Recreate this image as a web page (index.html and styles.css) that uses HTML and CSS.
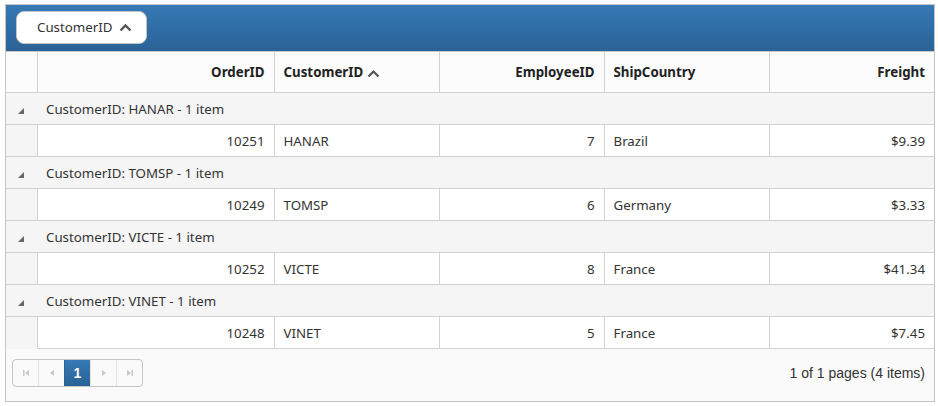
FILE: index.html
```html
<!DOCTYPE html>
<html>
<head>
<meta charset="utf-8">
<link rel="stylesheet" href="styles.css">
</head>
<body>
<div class="grid">
  <div class="grouping">
    <span class="group-chip">CustomerID
      <svg class="chev" width="13" height="9" viewBox="0 0 13 9"><path d="M1.5 7.5 L6.5 2.5 L11.5 7.5" fill="none" stroke="#555" stroke-width="2.4"/></svg>
    </span>
  </div>
  <table class="tbl">
    <colgroup>
      <col class="c-h"><col class="c-o"><col class="c-n"><col class="c-n"><col class="c-n"><col class="c-n">
    </colgroup>
    <thead>
      <tr>
        <th class="hc"></th>
        <th class="r">OrderID</th>
        <th>CustomerID <svg class="chev" width="13" height="9" viewBox="0 0 13 9"><path d="M1.5 7.5 L6.5 2.5 L11.5 7.5" fill="none" stroke="#555" stroke-width="2.2"/></svg></th>
        <th class="r">EmployeeID</th>
        <th>ShipCountry</th>
        <th class="r">Freight</th>
      </tr>
    </thead>
    <tbody>
      <tr class="grp"><td class="hc"><span class="tri"></span></td><td colspan="5">CustomerID: HANAR - 1 item</td></tr>
      <tr class="row"><td class="hc"></td><td class="r">10251</td><td>HANAR</td><td class="r">7</td><td>Brazil</td><td class="r">$9.39</td></tr>
      <tr class="grp"><td class="hc"><span class="tri"></span></td><td colspan="5">CustomerID: TOMSP - 1 item</td></tr>
      <tr class="row"><td class="hc"></td><td class="r">10249</td><td>TOMSP</td><td class="r">6</td><td>Germany</td><td class="r">$3.33</td></tr>
      <tr class="grp"><td class="hc"><span class="tri"></span></td><td colspan="5">CustomerID: VICTE - 1 item</td></tr>
      <tr class="row"><td class="hc"></td><td class="r">10252</td><td>VICTE</td><td class="r">8</td><td>France</td><td class="r">$41.34</td></tr>
      <tr class="grp"><td class="hc"><span class="tri"></span></td><td colspan="5">CustomerID: VINET - 1 item</td></tr>
      <tr class="row"><td class="hc"></td><td class="r">10248</td><td>VINET</td><td class="r">5</td><td>France</td><td class="r">$7.45</td></tr>
    </tbody>
  </table>
  <div class="pager">
    <div class="pages">
      <span class="pb"><svg width="8" height="8" viewBox="0 0 8 8"><rect x="1" y="1" width="1.5" height="6" fill="#c8c8c8"/><path d="M7 1 L3 4 L7 7Z" fill="#c8c8c8"/></svg></span>
      <span class="pb"><svg width="8" height="8" viewBox="0 0 8 8"><path d="M6 1 L2 4 L6 7Z" fill="#c8c8c8"/></svg></span>
      <span class="pb active">1</span>
      <span class="pb"><svg width="8" height="8" viewBox="0 0 8 8"><path d="M2 1 L6 4 L2 7Z" fill="#c8c8c8"/></svg></span>
      <span class="pb"><svg width="8" height="8" viewBox="0 0 8 8"><path d="M1 1 L5 4 L1 7Z" fill="#c8c8c8"/><rect x="5.5" y="1" width="1.5" height="6" fill="#c8c8c8"/></svg></span>
    </div>
    <div class="info">1 of 1 pages (4 items)</div>
  </div>
</div>
</body>
</html>
```
FILE: styles.css
```css
body {
  margin: 0;
  background: #fff;
  font-family: "Noto Sans", "Open Sans", sans-serif;
  font-size: 13.3px;
  color: #333;
}
.grid {
  margin: 4px 0 0 5px;
  width: 928px;
  border: 1px solid #c5c5c5;
  background: #fafafa;
}
.grouping {
  height: 46px;
  background: linear-gradient(#3679b6, #2a6396);
  display: flex;
  align-items: center;
  padding-left: 10px;
  border-bottom: 1px solid #c5c5c5;
}
.group-chip {
  display: inline-flex;
  align-items: center;
  gap: 7px;
  height: 31px;
  padding: 0 14px 0 20px;
  background: #fff;
  border: 1px solid #c5c5c5;
  border-radius: 8px;
  color: #333;
  margin-top: -2px;
}
.chev { vertical-align: middle; }
.tbl {
  width: 100%;
  border-collapse: collapse;
  table-layout: fixed;
}
.c-h { width: 31px; }
.c-o { width: 237px; }
.tbl th, .tbl td {
  border: 1px solid #d2d2d2;
  padding: 0 9px;
  text-align: left;
  white-space: nowrap;
}
.tbl tr > :first-child { border-left: none; }
.tbl tr > :last-child { border-right: none; }
.tbl th {
  height: 40px;
  font-weight: bold;
  color: #222;
  background: #fcfcfc;
  border-top: none;
}
.tbl .r { text-align: right; }
.grp td {
  height: 31px;
  background: #f5f5f5;
  border-left: none;
  border-right: none;
}
.row td {
  height: 31px;
  background: #fff;
}
.row td.hc { background: #f5f5f5; border-top: none; border-bottom: none; }
.tri {
  display: inline-block;
  width: 0; height: 0;
  border-left: 6px solid transparent;
  border-bottom: 6px solid #666;
  margin-left: 3px;
}
.pager {
  height: 52px;
  display: flex;
  align-items: center;
  justify-content: space-between;
  padding: 0 9px 4px 6px;
  box-sizing: border-box;
  font-family: "Liberation Sans", Arial, sans-serif;
  color: #333;
}
.pages {
  display: flex;
  border: 1px solid #c5c5c5;
  border-radius: 4px;
  overflow: hidden;
  background: #fafafa;
}
.pb {
  width: 25px;
  height: 26px;
  display: flex;
  align-items: center;
  justify-content: center;
  border-left: 1px solid #e3e3e3;
  font-weight: bold;
  font-size: 14px;
}
.pb:first-child { border-left: none; }
.pb.active {
  background: linear-gradient(#3679b6, #2a6396);
  color: #fff;
  border-left-color: #2a6396;
}
.info { font-size: 14px; }
```
